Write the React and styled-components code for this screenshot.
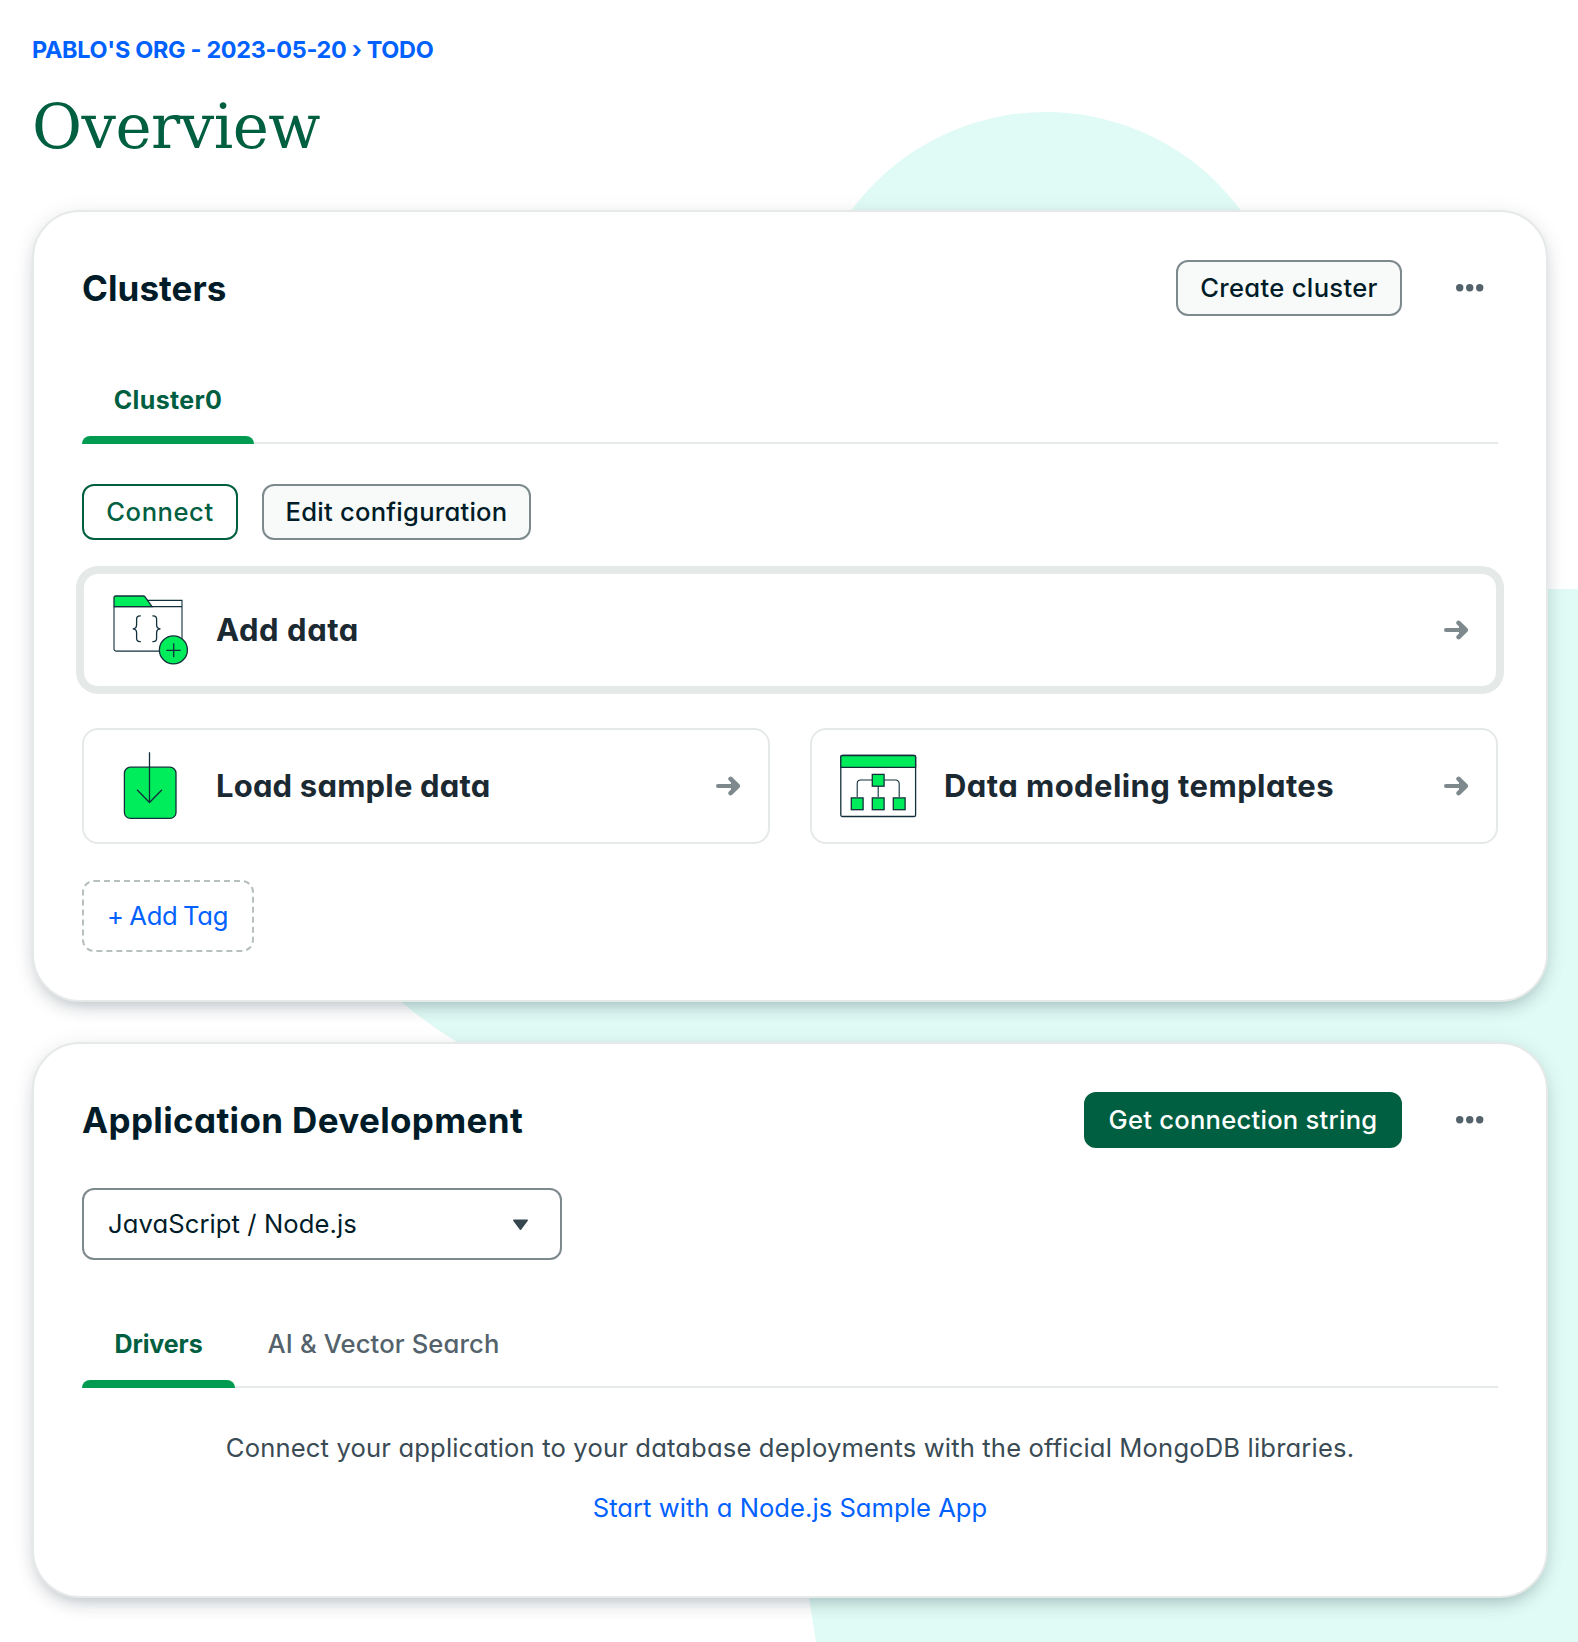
import React from "react";
import styled, { createGlobalStyle, css } from "styled-components";

const color = {
  ink: "#001c28",
  inkSoft: "#1b2932",
  text: "#394b54",
  muted: "#53626b",
  gray: "#7d898d",
  line: "#e5e9e7",
  green: "#005f41",
  accent: "#009a50",
  bright: "#00ed5b",
  mint: "#e0fbf5",
  blue: "#0061ff",
};

const GlobalStyle = createGlobalStyle`
  *, *::before, *::after { box-sizing: border-box; }
  body {
    margin: 0;
    background: #ffffff;
    color: ${color.ink};
    font-family: Inter, "Open Sans", sans-serif;
    font-feature-settings: "cv11";
    font-size: 25.6px;
  }
  h1, h2, h3, p { margin: 0; }
  button { font: inherit; font-feature-settings: inherit; color: inherit; cursor: pointer; }
  a { color: ${color.blue}; text-decoration: none; }
`;

const Page = styled.main`
  position: relative;
  width: 1578px;
  height: 1642px;
  overflow: hidden;
  padding: 34px 30px 0 32px;
`;

const Backdrop = styled.svg`
  position: absolute;
  inset: 0;
  fill: ${color.mint};
`;

const Content = styled.div`
  position: relative;
  display: flex;
  flex-direction: column;
`;

const Breadcrumb = styled.a`
  height: 32px;
  line-height: 32px;
  font-size: 23.4px;
  font-weight: 700;
  letter-spacing: -0.29px;
  white-space: nowrap;
`;

const PageTitle = styled.h1`
  margin-top: 25px;
  height: 72px;
  line-height: 72px;
  font-family: "DejaVu Serif", serif;
  font-size: 61px;
  font-weight: 400;
  letter-spacing: -0.5px;
  color: ${color.green};
`;

const Cards = styled.div`
  display: flex;
  flex-direction: column;
  gap: 40px;
  margin-top: 47px;
`;

const Card = styled.section`
  display: flex;
  flex-direction: column;
  border: 2px solid ${color.line};
  border-radius: 48px;
  background: #ffffff;
  padding: 48px 48px ${(p) => p.$bottom || 48}px;
  box-shadow: 0 8px 20px -8px rgba(0, 30, 43, 0.34), 0 2px 24px rgba(0, 30, 43, 0.06);
`;

const CardHeader = styled.header`
  display: flex;
  align-items: center;
  height: 56px;
`;

const CardTitle = styled.h2`
  flex: 1;
  font-size: 35px;
  font-weight: 700;
  line-height: 56px;
  letter-spacing: ${(p) => p.$track}px;
`;

const tones = {
  default: css`border-color: ${color.gray}; background: #f8faf9; color: ${color.ink};`,
  outline: css`border-color: ${color.green}; background: #ffffff; color: ${color.green};`,
  primary: css`border-color: ${color.green}; background: ${color.green}; color: #ffffff;`,
};

const Button = styled.button`
  display: flex;
  align-items: center;
  justify-content: center;
  width: ${(p) => p.$width}px;
  height: 56px;
  padding: 0 0 2px;
  border: 2px solid;
  border-radius: 12px;
  font-size: 25.6px;
  font-weight: 500;
  letter-spacing: ${(p) => p.$track}px;
  white-space: nowrap;
  ${(p) => tones[p.$tone || "default"]}
`;

const MenuButton = styled.button`
  display: flex;
  align-items: center;
  justify-content: center;
  width: 56px;
  height: 56px;
  margin-left: 40px;
  padding: 0;
  border: 0;
  background: none;
`;

const TabList = styled.div`
  display: flex;
  height: 88px;
  margin-top: 40px;
  box-shadow: inset 0 -2px ${color.line};
`;

const Tab = styled.button`
  display: flex;
  flex-direction: column;
  width: ${(p) => p.$width}px;
  height: 88px;
  padding: 0;
  border: 0;
  background: none;
  align-items: center;
  font-size: ${(p) => (p.$active ? 25 : 25.6)}px;
  line-height: 80px;
  font-weight: ${(p) => (p.$active ? 700 : 500)};
  color: ${(p) => (p.$active ? color.green : color.muted)};
  letter-spacing: ${(p) => p.$track}px;
  white-space: nowrap;

  &::before { content: ""; flex: 0 0 4px; }
  &::after {
    content: "";
    width: 100%;
    height: 8px;
    flex: 0 0 8px;
    margin-top: -4px;
    border-radius: 8px 8px 0 0;
    background: ${(p) => (p.$active ? color.accent : "none")};
  }
`;

const Actions = styled.div`
  display: flex;
  gap: 24px;
  margin-top: 40px;
`;

const Options = styled.div`
  display: grid;
  grid-template-columns: 1fr 1fr;
  gap: 40px;
  margin-top: 32px;
`;

const Option = styled.button`
  display: flex;
  align-items: center;
  height: 116px;
  padding: 0 28px 0 26px;
  border: 2px solid ${color.line};
  border-radius: 16px;
  background: #ffffff;
  text-align: left;
  ${(p) =>
    p.$focused &&
    css`
      grid-column: 1 / -1;
      box-shadow: 0 0 0 6px ${color.line};
    `}
`;

const OptionTitle = styled.span`
  flex: 1;
  margin-left: 26px;
  padding-bottom: 2px;
  font-size: 31px;
  font-weight: 700;
  color: ${color.inkSoft};
  letter-spacing: ${(p) => p.$track}px;
  white-space: nowrap;
`;

const Picture = styled.svg`
  width: 80px;
  height: 80px;
  fill: none;
  stroke: #12303b;
  stroke-width: 1.3;
  .g { fill: ${color.bright}; }
`;

const AddTag = styled.button`
  display: flex;
  align-items: center;
  justify-content: center;
  width: 172px;
  height: 72px;
  margin-top: 36px;
  padding: 0 1px 2px 0;
  border: 2px dashed #b8c0bd;
  border-radius: 12px;
  background: none;
  color: ${color.blue};
  font-size: 25.6px;
  letter-spacing: -0.3px;
  word-spacing: -1.2px;
  white-space: pre;
`;

const Select = styled.button`
  display: flex;
  align-items: center;
  justify-content: space-between;
  width: 480px;
  height: 72px;
  margin-top: 40px;
  padding: 0 31px 2px 24px;
  border: 2px solid ${color.gray};
  border-radius: 12px;
  background: #ffffff;
  font-size: 25.6px;
  letter-spacing: 0.09px;
`;

const Caret = styled.svg`
  width: 17px;
  height: 12px;
  margin-top: 4px;
  fill: #36474f;
  stroke: #36474f;
  stroke-width: 1.5;
  stroke-linejoin: round;
`;

const Message = styled.div`
  display: flex;
  flex-direction: column;
  align-items: center;
  gap: 20px;
  margin-top: 40px;
  line-height: 40px;
  color: ${color.text};
  letter-spacing: 0.155px;
  white-space: nowrap;
  a { letter-spacing: 0.03px; }
`;

const Dots = () => (
  <svg width="28" height="8" viewBox="0 0 28 8" fill={color.muted}>
    <circle cx="3.7" cy="3.7" r="3.7" />
    <circle cx="13.7" cy="3.7" r="3.7" />
    <circle cx="23.7" cy="3.7" r="3.7" />
  </svg>
);

const Arrow = () => (
  <svg width="24" height="20" viewBox="0 0 24 20" fill="none" stroke={color.gray} strokeLinecap="round" strokeLinejoin="round">
    <path d="M2.1 10H18" strokeWidth="4.2" />
    <path d="M14.6 2.9L21.7 10L14.6 17.1" strokeWidth="4.6" />
    <path d="M16 6.5L19.5 10L16 13.5Z" fill={color.gray} strokeWidth="2" />
  </svg>
);

const FolderPicture = () => (
  <Picture viewBox="0 0 80 80">
    <g strokeWidth="1.1">
      <path d="M37 10.4H72V59a2 2 0 0 1-2 2.1H6a2 2 0 0 1-2-2.1V16.6" />
      <path d="M4 16.6H72" />
    </g>
    <path className="g" d="M4 16.6V7.6a1.6 1.6 0 0 1 1.6-1.6H33.4a2 2 0 0 1 1.6.8L42 16.6Z" />
    <path d="M30.8 25.8H30a3.4 3.4 0 0 0-3.4 3.4v5.6c0 2.4-1.2 4-3.9 4c2.7 0 3.9 1.6 3.9 4v5.5A3.4 3.4 0 0 0 30 51.7h.8" />
    <path d="M42.4 25.8h.8a3.4 3.4 0 0 1 3.4 3.4v5.6c0 2.4 1.2 4 3.9 4c-2.7 0-3.9 1.6-3.9 4v5.5a3.4 3.4 0 0 1-3.4 3.4h-.8" />
    <circle className="g" cx="63.4" cy="59.9" r="14" />
    <path d="M56.4 60.4H70.6M63.7 53.2V67.2" />
  </Picture>
);

const DownloadPicture = () => (
  <Picture viewBox="0 0 80 80">
    <rect className="g" x="14.4" y="21.2" width="51.6" height="51.2" rx="6" />
    <path d="M39.5 6.3V56.5M27 43.7L39.5 56.5L52 43.7" />
  </Picture>
);

const DiagramPicture = () => (
  <Picture viewBox="0 0 80 80">
    <rect x="2.8" y="9.5" width="74.8" height="61" rx="1.6" />
    <path className="g" d="M2.8 21.3V11.1a1.6 1.6 0 0 1 1.6-1.6H76a1.6 1.6 0 0 1 1.6 1.6V21.3Z" />
    <path d="M19.2 51V37.5a3.5 3.5 0 0 1 3.5-3.5H57.7a3.5 3.5 0 0 1 3.5 3.5V51M40.2 40V51" strokeWidth="1.1" />
    <rect className="g" x="34.3" y="28.4" width="11.8" height="11.8" />
    <rect className="g" x="13.3" y="51.9" width="11.8" height="11.8" />
    <rect className="g" x="34.3" y="51.9" width="11.8" height="11.8" />
    <rect className="g" x="55.3" y="51.9" width="11.8" height="11.8" />
  </Picture>
);

export default function App() {
  return (
    <Page>
      <GlobalStyle />
      <Backdrop width="1578" height="1642" viewBox="0 0 1578 1642" aria-hidden="true">
        <circle cx="1046" cy="354" r="242" />
        <path d="M1578 589H600C420 589 290 700 310 850C320 910 355 960 401.5 1002Q427 1024 457 1042L800 1250V1500Q803 1560 809 1598L816 1642H1578Z" />
      </Backdrop>
      <Content>
        <Breadcrumb href="#">PABLO'S ORG - 2023-05-20 › TODO</Breadcrumb>
        <PageTitle>Overview</PageTitle>
        <Cards>
          <Card>
            <CardHeader>
              <CardTitle $track={0.07}>Clusters</CardTitle>
              <Button $width={226} $track={0.32}>Create cluster</Button>
              <MenuButton aria-label="Cluster options"><Dots /></MenuButton>
            </CardHeader>
            <TabList>
              <Tab $active $width={172} $track={0.35}>Cluster0</Tab>
            </TabList>
            <Actions>
              <Button $tone="outline" $width={156} $track={0.55}>Connect</Button>
              <Button $width={269} $track={0.24}>Edit configuration</Button>
            </Actions>
            <Options>
              <Option $focused>
                <FolderPicture />
                <OptionTitle $track={0.55}>Add data</OptionTitle>
                <Arrow />
              </Option>
              <Option>
                <DownloadPicture />
                <OptionTitle $track={0.18}>Load sample data</OptionTitle>
                <Arrow />
              </Option>
              <Option>
                <DiagramPicture />
                <OptionTitle $track={0.42}>Data modeling templates</OptionTitle>
                <Arrow />
              </Option>
            </Options>
            <AddTag>+ Add Tag</AddTag>
          </Card>

          <Card $bottom={68}>
            <CardHeader>
              <CardTitle $track={0.36}>Application Development</CardTitle>
              <Button $tone="primary" $width={318} $track={0.24}>Get connection string</Button>
              <MenuButton aria-label="Application options"><Dots /></MenuButton>
            </CardHeader>
            <Select>
              JavaScript / Node.js
              <Caret viewBox="0 0 17 12">
                <path d="M1.8 1.3H15.2L8.5 10.2Z" />
              </Caret>
            </Select>
            <TabList>
              <Tab $active $width={153} $track={-0.1}>Drivers</Tab>
              <Tab $width={297} $track={0.12}>AI &amp; Vector Search</Tab>
            </TabList>
            <Message>
              <p>Connect your application to your database deployments with the official MongoDB libraries.</p>
              <a href="#">Start with a Node.js Sample App</a>
            </Message>
          </Card>
        </Cards>
      </Content>
    </Page>
  );
}
